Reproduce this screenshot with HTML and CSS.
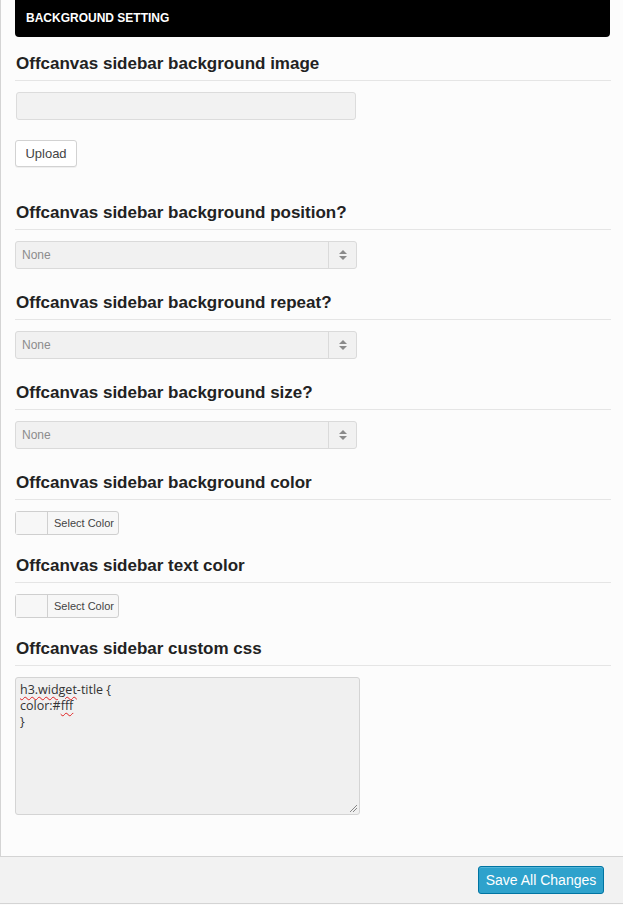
FILE: index.html
```html
<!DOCTYPE html>
<html>
<head>
<meta charset="utf-8">
<link rel="stylesheet" href="styles.css">
</head>
<body>
<div class="panel">
  <div class="section-bar">BACKGROUND SETTING</div>

  <div class="field field-first">
    <h3 class="field-title">Offcanvas sidebar background image</h3>
    <div class="text-input"></div>
    <button class="btn upload">Upload</button>
  </div>

  <div class="field">
    <h3 class="field-title">Offcanvas sidebar background position?</h3>
    <div class="select"><span class="select-value">None</span><span class="select-arrow"><svg width="8" height="10" viewBox="0 0 8 10"><path d="M4 0L8 4H0Z M0 6H8L4 10Z" fill="#8a8a8a"/></svg></span></div>
  </div>

  <div class="field">
    <h3 class="field-title">Offcanvas sidebar background repeat?</h3>
    <div class="select"><span class="select-value">None</span><span class="select-arrow"><svg width="8" height="10" viewBox="0 0 8 10"><path d="M4 0L8 4H0Z M0 6H8L4 10Z" fill="#8a8a8a"/></svg></span></div>
  </div>

  <div class="field">
    <h3 class="field-title">Offcanvas sidebar background size?</h3>
    <div class="select"><span class="select-value">None</span><span class="select-arrow"><svg width="8" height="10" viewBox="0 0 8 10"><path d="M4 0L8 4H0Z M0 6H8L4 10Z" fill="#8a8a8a"/></svg></span></div>
  </div>

  <div class="field">
    <h3 class="field-title">Offcanvas sidebar background color</h3>
    <div class="color-btn"><span class="swatch"></span><span class="color-label">Select Color</span></div>
  </div>

  <div class="field">
    <h3 class="field-title">Offcanvas sidebar text color</h3>
    <div class="color-btn"><span class="swatch"></span><span class="color-label">Select Color</span></div>
  </div>

  <div class="field">
    <h3 class="field-title">Offcanvas sidebar custom css</h3>
    <div class="textarea"><div class="code"><span class="sp">h3.widget</span>-title {<br>color:#<span class="sp">fff</span><br>}</div><svg class="grip" width="8" height="8" viewBox="0 0 8 8"><path d="M1 8L8 1M4 8L8 4" stroke="#888" stroke-width="1"/></svg></div>
  </div>
</div>
<div class="footer">
  <button class="save">Save All Changes</button>
</div>
</body>
</html>
```
FILE: styles.css
```css
html, body { margin: 0; padding: 0; }
body {
  background: #fcfcfc;
  font-family: "Liberation Sans", Arial, sans-serif;
  color: #222;
  width: 623px;
}
.panel {
  display: flex;
  flex-direction: column;
  align-items: stretch;
  height: 857px;
  box-sizing: border-box;
  border-left: 1px solid #d4d4d4;
  border-bottom: 1px solid #d4d4d4;
  padding: 0 12px 0 14px;
}
.section-bar {
  height: 37px;
  background: #000;
  color: #fff;
  font-weight: bold;
  font-size: 12px;
  line-height: 37px;
  padding-left: 11px;
  border-radius: 0 0 4px 4px;
  margin-right: 1px;
}
.field { margin-top: 21px; display: flex; flex-direction: column; align-items: flex-start; }
.field-first { margin-top: 17px; }
.field-title {
  align-self: stretch;
  margin: 0 0 11px 0;
  font-size: 17px;
  line-height: 20px;
  font-weight: bold;
  color: #222;
  padding: 0 0 6px 1px;
  border-bottom: 1px solid #e5e5e5;
}
.text-input {
  margin-left: 1px;
  width: 340px;
  height: 28px;
  box-sizing: border-box;
  background: #f2f2f2;
  border: 1px solid #dcdcdc;
  border-radius: 3px;
}
.btn {
  display: block;
  margin-top: 20px;
  margin-bottom: 15px;
  width: 62px;
  height: 27px;
  box-sizing: border-box;
  background: #fff;
  border: 1px solid #d2d2d2;
  border-radius: 3px;
  font-family: "Liberation Sans", Arial, sans-serif;
  font-size: 13px;
  color: #444;
  padding: 0;
  box-shadow: 0 1px 0 rgba(0,0,0,0.05);
}
.select {
  display: flex;
  width: 342px;
  height: 28px;
  box-sizing: border-box;
  background: #f1f1f1;
  border: 1px solid #dadada;
  border-radius: 3px;
  margin-bottom: 3px;
}
.select-value {
  flex: 1;
  font-size: 12px;
  line-height: 26px;
  color: #8c8c8c;
  padding-left: 6px;
}
.select-arrow {
  width: 27px;
  border-left: 1px solid #dadada;
  display: flex;
  align-items: center;
  justify-content: center;
}
.color-btn {
  display: flex;
  width: 104px;
  height: 24px;
  box-sizing: border-box;
  border: 1px solid #cfcfcf;
  border-radius: 3px;
  background: #f7f7f7;
}
.swatch {
  width: 31px;
  border-right: 1px solid #d0d0d0;
  background: #f7f7f7;
}
.color-label {
  font-size: 11px;
  line-height: 22px;
  color: #444;
  padding-left: 6px;
}
.textarea {
  position: relative;
  width: 345px;
  height: 138px;
  box-sizing: border-box;
  background: #f0f0f0;
  border: 1px solid #d4d4d4;
  border-radius: 3px;
  padding: 4px 4px;
}
.code {
  font-family: "Open Sans", sans-serif;
  font-size: 12.5px;
  line-height: 16px;
  color: #333;
}
.sp {
  text-decoration: underline wavy #e02020;
  text-decoration-thickness: 1px;
  text-underline-offset: 2px;
}
.grip { position: absolute; right: 2px; bottom: 2px; }
.footer {
  height: 46px;
  background: #f2f2f2;
  border-bottom: 1px solid #d4d4d4;
  display: flex;
  justify-content: flex-end;
  align-items: center;
  padding-right: 19px;
}
.save {
  width: 126px;
  height: 28px;
  box-sizing: border-box;
  background: #2ea2cc;
  border: 1px solid #0074a2;
  border-radius: 3px;
  color: #fff;
  font-family: "Liberation Sans", Arial, sans-serif;
  font-size: 14px;
  padding: 0;
  box-shadow: inset 0 1px 0 rgba(120,200,230,0.5);
}
```
